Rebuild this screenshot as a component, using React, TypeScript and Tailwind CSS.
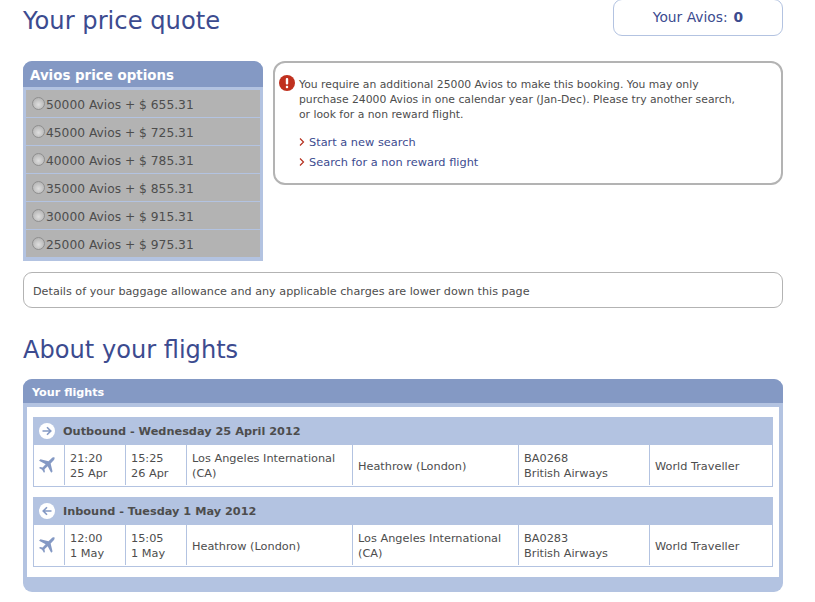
import React from 'react';

const options = [
  ['50000', '655.31'],
  ['45000', '725.31'],
  ['40000', '785.31'],
  ['35000', '855.31'],
  ['30000', '915.31'],
  ['25000', '975.31'],
];

function Plane() {
  return (
    <svg width="17" height="17" viewBox="0 0 16 16" className="text-[#8499c4] ml-[-6px]" fill="currentColor">
      <path d="M15.6 0.6c-0.7-0.6-2-0.3-3 0.7L9.9 4 2.3 2.2 1 3.5l6.2 3.3-2.9 3-2.4-0.4-0.9 0.9 2.9 1.7 1.7 2.9 0.9-0.9-0.4-2.4 3-2.9 3.3 6.2 1.3-1.3-1.8-7.6 2.7-2.7c1-1 1.3-2.3 0.9-3.3z" />
    </svg>
  );
}

function ArrowBadge({ back }: { back?: boolean }) {
  return (
    <svg width="16" height="16" viewBox="0 0 16 16" className="shrink-0">
      <circle cx="8" cy="8" r="8" fill="#fff" />
      {back ? (
        <path d="M12.5 8H4.5M8 4.2 4.2 8 8 11.8" fill="none" stroke="#8499c4" strokeWidth="1.6" />
      ) : (
        <path d="M3.5 8h8M8 4.2 11.8 8 8 11.8" fill="none" stroke="#8499c4" strokeWidth="1.6" />
      )}
    </svg>
  );
}

function Chevron() {
  return (
    <svg width="6" height="8" viewBox="0 0 6 8" className="shrink-0 mt-[-2px]">
      <path d="M1 0.5 4.5 4 1 7.5" fill="none" stroke="#b5301f" strokeWidth="1.2" />
    </svg>
  );
}

type Leg = {
  title: string;
  back?: boolean;
  dep: string[];
  arr: string[];
  from: string[];
  to: string[];
  flight: string;
};

function Cell({ lines, width }: { lines: string[]; width: string }) {
  return (
    <div className={`flex flex-col justify-center pl-[5px] pt-[2px] border-l border-[#b3c3e1] ${width}`}>
      {lines.map((t) => (
        <div key={t}>{t}</div>
      ))}
    </div>
  );
}

function FlightTable({ leg }: { leg: Leg }) {
  return (
    <div>
      <div className="h-[28px] bg-[#b3c3e1] flex items-center pl-[6px] gap-[8px]">
        <ArrowBadge back={leg.back} />
        <span className="font-bold text-[11.3px] pt-[2px] text-[#4d4d4d]">{leg.title}</span>
      </div>
      <div className="h-[42px] flex border-x border-b border-[#b3c3e1] text-[11.3px] leading-[15px] text-[#4d4d4d] bg-white pb-px">
        <div className="w-[30px] flex items-center justify-center"><Plane /></div>
        <Cell lines={leg.dep} width="w-[61px]" />
        <Cell lines={leg.arr} width="w-[61px]" />
        <Cell lines={leg.from} width="w-[166px]" />
        <Cell lines={leg.to} width="w-[166px]" />
        <Cell lines={[leg.flight, 'British Airways']} width="w-[131px]" />
        <Cell lines={['World Traveller']} width="flex-1" />
      </div>
    </div>
  );
}

export default function App() {
  return (
    <div className="w-[815px] h-[602px] overflow-hidden bg-white pl-[23px] pr-[32px] font-['DejaVu_Sans',sans-serif] text-[#4d4d4d]">
      <div className="flex justify-between items-start h-[62px] mt-[-1px]">
        <h1 className="text-[24.2px] leading-[30px] mt-[7px] text-[#3c4b8f]">Your price quote</h1>
        <div className="w-[170px] h-[37px] border border-[#b3c3e1] rounded-[9px] flex items-center justify-center text-[13.8px] text-[#3c4b8f] gap-[6px]">
          <span>Your Avios:</span>
          <span className="font-bold">0</span>
        </div>
      </div>

      <div className="flex gap-[10px] items-start">
        <div className="w-[240px] h-[200px] bg-[#b3c3e1] rounded-t-[9px]">
          <div className="h-[26px] bg-[#8499c4] rounded-t-[9px] pl-[7px] pt-[5px] flex items-center text-white font-bold text-[13.4px]">
            Avios price options
          </div>
          <div className="px-[3px] pt-[3px] flex flex-col">
            {options.map(([avios, price]) => (
              <div key={avios} className="h-[28px] bg-[#b3b3b3] border-b border-[#b3c3e1] flex items-center text-[12.25px] text-[#4d4d4d] pl-[6px]">
                <span className="w-[13px] h-[13px] rounded-full border border-[#8f8f8f] bg-[radial-gradient(circle_at_50%_60%,#dedede,#a9a9a9)] mr-px" />
                <span className="pt-[4px]">{avios} Avios + $ {price}</span>
              </div>
            ))}
          </div>
        </div>

        <div className="w-[510px] h-[124px] border-2 border-[#b3b3b3] rounded-[12px] relative pl-[24px] pt-[14px] text-[10.8px] leading-[15px]">
          <svg width="16" height="16" viewBox="0 0 16 16" className="absolute left-[4px] top-[12px]">
            <circle cx="8" cy="8" r="8" fill="#c0311f" />
            <rect x="6.8" y="3" width="2.4" height="6.5" rx="1" fill="#fff" />
            <rect x="6.8" y="10.8" width="2.4" height="2.4" rx="1" fill="#fff" />
          </svg>
          <p className="w-[445px]">
            You require an additional 25000 Avios to make this booking. You may only purchase 24000 Avios in one calendar year (Jan-Dec). Please try another search, or look for a non reward flight.
          </p>
          <div className="mt-[13px] flex flex-col gap-[5px] text-[11.35px] text-[#3c4b8f]">
            <a className="flex items-center gap-[4px]"><Chevron />Start a new search</a>
            <a className="flex items-center gap-[4px]"><Chevron />Search for a non reward flight</a>
          </div>
        </div>
      </div>

      <div className="mt-[11px] h-[36px] border border-[#b3b3b3] rounded-[9px] flex items-center pl-[9px] pt-[4px] text-[11.2px]">
        Details of your baggage allowance and any applicable charges are lower down this page
      </div>

      <h2 className="mt-[27px] text-[24.1px] leading-[30px] text-[#3c4b8f]">About your flights</h2>

      <div className="mt-[14px] h-[213px] bg-[#b3c3e1] rounded-[9px] flex flex-col">
        <div className="h-[24px] shrink-0 bg-[#8499c4] rounded-t-[9px] pl-[9px] pt-[5px] flex items-center text-white font-bold text-[11.2px]">
          Your flights
        </div>
        <div className="mx-[4px] mt-[4px] h-[170px] bg-white px-[6px] pt-[10px] flex flex-col gap-[10px]">
          <FlightTable
            leg={{
              title: 'Outbound - Wednesday 25 April 2012',
              dep: ['21:20', '25 Apr'],
              arr: ['15:25', '26 Apr'],
              from: ['Los Angeles International', '(CA)'],
              to: ['Heathrow (London)'],
              flight: 'BA0268',
            }}
          />
          <FlightTable
            leg={{
              title: 'Inbound - Tuesday 1 May 2012',
              back: true,
              dep: ['12:00', '1 May'],
              arr: ['15:05', '1 May'],
              from: ['Heathrow (London)'],
              to: ['Los Angeles International', '(CA)'],
              flight: 'BA0283',
            }}
          />
        </div>
      </div>
    </div>
  );
}
